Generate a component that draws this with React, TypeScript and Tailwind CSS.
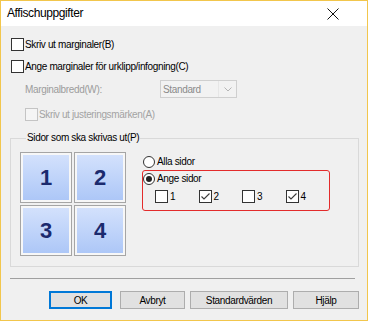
import React from 'react';

const font = "font-['Liberation_Sans',Arial,sans-serif]";

function CheckBox({ checked = false, disabled = false }: { checked?: boolean; disabled?: boolean }) {
    return (
        <span
            className={`flex h-[13px] w-[13px] shrink-0 items-center justify-center border ${
                disabled ? 'border-[#c4c4c4] bg-[#f5f5f5]' : 'border-[#333333] bg-white'
            }`}
        >
            {checked && (
                <svg width="11" height="11" viewBox="0 0 11 11">
                    <path d="M1.5 5.5 L4 8 L9.5 2.5" fill="none" stroke="#3a3a3a" strokeWidth="1.1" />
                </svg>
            )}
        </span>
    );
}

function Radio({ checked = false }: { checked?: boolean }) {
    return (
        <span className="flex h-[12px] w-[12px] shrink-0 items-center justify-center rounded-full border border-[#333333] bg-white">
            {checked && <span className="h-[6px] w-[6px] rounded-full bg-[#222222]" />}
        </span>
    );
}

function Tile({ n }: { n: number }) {
    return (
        <div className="h-[51px] w-[52px] border border-[#a5a5a5] bg-[#f7f7f7] p-[2px]">
            <div className="flex h-full w-full items-center justify-center bg-gradient-to-b from-[#d3e1fc] to-[#adc7f7]">
                <span className="font-['Liberation_Sans',Arial,sans-serif] text-[22px] font-bold leading-none text-[#1b2a6e]">
                    {n}
                </span>
            </div>
        </div>
    );
}

export default function App() {
    const pages = [
        { n: 1, checked: false },
        { n: 2, checked: true },
        { n: 3, checked: false },
        { n: 4, checked: true },
    ];

    return (
        <div className={`${font} flex h-[321px] w-[368px] flex-col border border-[#f2c64c] bg-[#f0f0f0] text-[10px] leading-[13px] tracking-[-0.35px] text-black`}>
            {/* title bar */}
            <div className="flex h-[25px] shrink-0 items-center justify-between bg-white pl-[6px] pr-[28px]">
                <span className="text-[12px] tracking-[-0.4px]">Affischuppgifter</span>
                <svg width="12" height="12" viewBox="0 0 12 12">
                    <path d="M0.5 0.5 L11.5 11.5 M11.5 0.5 L0.5 11.5" stroke="#111" strokeWidth="1" />
                </svg>
            </div>

            {/* body */}
            <div className="flex flex-col pl-[10px] pt-[12px]">
                <label className="flex items-center gap-[1px]">
                    <CheckBox />
                    <span>Skriv ut marginaler(B)</span>
                </label>
                <label className="mt-[9px] flex items-center gap-[1px]">
                    <CheckBox />
                    <span>Ange marginaler för urklipp/infogning(C)</span>
                </label>

                <div className="mt-[7px] flex items-center pl-[14px] text-[#9c9c9c]">
                    <span className="w-[135px]">Marginalbredd(W):</span>
                    <div className="flex h-[18px] w-[77px] items-center border border-[#cfcfcf] bg-[#f2f2f2]">
                        <span className="flex h-full flex-1 items-center border-r border-[#e6e6e6] pl-[2px] text-[#8a8a8a]">
                            Standard
                        </span>
                        <span className="flex w-[17px] justify-center">
                            <svg width="8" height="5" viewBox="0 0 8 5">
                                <path d="M0.5 0.5 L4 4 L7.5 0.5" fill="none" stroke="#b5b5b5" strokeWidth="1" />
                            </svg>
                        </span>
                    </div>
                </div>

                <label className="mt-[10px] flex items-center gap-[1px] pl-[14px] text-[#a3a3a3]">
                    <CheckBox disabled />
                    <span>Skriv ut justeringsmärken(A)</span>
                </label>

                {/* group box */}
                <fieldset className="mt-[11px] -ml-px w-[349px] border border-[#d9d9d9] pb-[10px] pl-[9px]">
                    <legend className="ml-[6px] px-[1px] leading-[12px]">Sidor som ska skrivas ut(P)</legend>
                    <div className="flex pt-[8px]">
                        <div className="grid grid-cols-2 gap-x-[2px] gap-y-[2px]">
                            {pages.map((p) => (
                                <Tile key={p.n} n={p.n} />
                            ))}
                        </div>

                        <div className="ml-[16px] flex flex-col pt-[3px]">
                            <label className="flex items-center gap-[2px] pl-[1px]">
                                <Radio />
                                <span>Alla sidor</span>
                            </label>
                            <div className="mt-[2px] flex h-[41px] w-[188px] flex-col rounded-[3px] border-[1.5px] border-[#e32b2b] pt-[1px]">
                                <label className="flex items-center gap-[2px]">
                                    <Radio checked />
                                    <span>Ange sidor</span>
                                </label>
                                <div className="mt-[5px] flex pl-[12px]">
                                    {pages.map((p) => (
                                        <label key={p.n} className="flex w-[50px] items-center gap-[2px]">
                                            <CheckBox checked={p.checked} />
                                            <span>{p.n}</span>
                                        </label>
                                    ))}
                                </div>
                            </div>
                        </div>
                    </div>
                </fieldset>

                <div className="mt-[11px] h-px w-[345px] -ml-px bg-[#a0a0a0]" />

                {/* buttons */}
                <div className="mt-[12px] flex pl-[38px]">
                    <button className="h-[18px] w-[63px] border-2 border-[#0078d7] bg-[#e1e1e1]">OK</button>
                    <button className="ml-[8px] h-[18px] w-[65px] border border-[#adadad] bg-[#e1e1e1]">Avbryt</button>
                    <button className="ml-[5px] h-[18px] w-[98px] border border-[#adadad] bg-[#e1e1e1]">Standardvärden</button>
                    <button className="ml-[5px] h-[18px] w-[66px] border border-[#adadad] bg-[#e1e1e1]">Hjälp</button>
                </div>
            </div>
        </div>
    );
}
